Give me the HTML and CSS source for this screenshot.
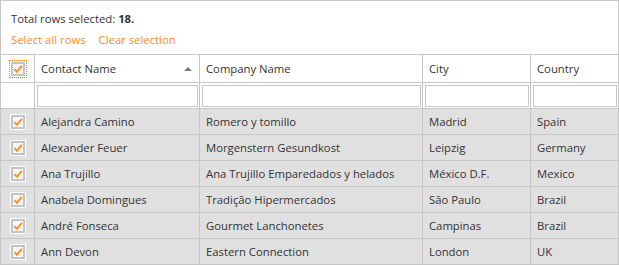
FILE: index.html
```html
<!DOCTYPE html>
<html lang="en">
<head>
    <meta charset="UTF-8">
    <title>Grid selection</title>
    <link rel="stylesheet" href="styles.css">
</head>
<body>
    <div class="grid">
        <!-- summary panel -->
        <div class="summary">
            <div class="total">Total rows selected: <b>18.</b></div>
            <div class="links">
                <a href="#" class="link">Select all rows</a>
                <a href="#" class="link">Clear selection</a>
            </div>
        </div>

        <!-- header -->
        <div class="row head">
            <div class="cell chk"><span class="box focus"><svg width="16" height="16" viewBox="0 0 16 16"><rect x="0.5" y="0.5" width="15" height="15" fill="#fff" stroke="#fff"/><rect x="2" y="2" width="12" height="12" fill="#f6f6f6" stroke="#c4c4c4" stroke-width="2"/><path d="M4.5 8.2 L7 10.8 L11.8 4.8" fill="none" stroke="#f7931e" stroke-width="2"/></svg></span></div>
            <div class="cell sorted">Contact Name <span class="arrow"></span></div>
            <div class="cell">Company Name</div>
            <div class="cell">City</div>
            <div class="cell">Country</div>
        </div>

        <!-- filter row -->
        <div class="row filter">
            <div class="cell chk"></div>
            <div class="cell"><input type="text" class="box-input"></div>
            <div class="cell"><input type="text" class="box-input"></div>
            <div class="cell"><input type="text" class="box-input"></div>
            <div class="cell"><input type="text" class="box-input"></div>
        </div>

        <div id="rows"></div>
    </div>

    <script>
        const customers = [
            ["Alejandra Camino", "Romero y tomillo", "Madrid", "Spain"],
            ["Alexander Feuer", "Morgenstern Gesundkost", "Leipzig", "Germany"],
            ["Ana Trujillo", "Ana Trujillo Emparedados y helados", "México D.F.", "Mexico"],
            ["Anabela Domingues", "Tradição Hipermercados", "São Paulo", "Brazil"],
            ["André Fonseca", "Gourmet Lanchonetes", "Campinas", "Brazil"],
            ["Ann Devon", "Eastern Connection", "London", "UK"]
        ];

        const checkSvg = '<span class="box"><svg width="16" height="16" viewBox="0 0 16 16"><rect x="0.5" y="0.5" width="15" height="15" fill="#fff" stroke="#fff"/><rect x="2" y="2" width="12" height="12" fill="#f6f6f6" stroke="#c4c4c4" stroke-width="2"/><path d="M4.5 8.2 L7 10.8 L11.8 4.8" fill="none" stroke="#f7931e" stroke-width="2"/></svg></span>';

        document.getElementById('rows').innerHTML = customers.map(c => `
            <div class="row data">
                <div class="cell chk">${checkSvg}</div>
                ${c.map(v => `<div class="cell">${v}</div>`).join('')}
            </div>`).join('');
    </script>
</body>
</html>
```

FILE: styles.css
```css
/* page */
body {
    margin: 0;
    font-family: "Open Sans", "Noto Sans", sans-serif;
    font-size: 11.3px;
    color: #333;
    background: #fff;
}

/* grid frame */
.grid {
    width: 617px;
    border: 1px solid #c6c6c6;
}

/* summary above the grid */
.summary {
    height: 54px;
    box-sizing: border-box;
    padding: 9px 10px 0;
    border-bottom: 1px solid #c6c6c6;
}

.total {
    line-height: 18px;
}

.links {
    margin-top: 3px;
    line-height: 18px;
    display: flex;
    gap: 13px;
}

.link {
    color: #f68b2c;
    text-decoration: none;
}

/* rows */
.row {
    display: grid;
    grid-template-columns: 33px 164px 222px 107px 87px;
    column-gap: 1px;
    background: #c6c6c6;
}

.row + .row,
#rows .row {
    border-top: 1px solid #c6c6c6;
}

.cell {
    background: #fff;
    padding: 0 6px;
    display: flex;
    align-items: center;
    white-space: nowrap;
    overflow: hidden;
}

.head .cell {
    height: 27px;
}

.filter .cell {
    height: 25px;
    padding: 2px 1px 1px 2px;
    box-sizing: border-box;
}

.data .cell {
    height: 25px;
    background: #e0e0e0;
}

.cell.chk {
    padding: 0;
    justify-content: center;
}

/* sort arrow */
.sorted {
    justify-content: space-between;
    padding-right: 7px;
}

.arrow {
    width: 0;
    height: 0;
    border-left: 4px solid transparent;
    border-right: 4px solid transparent;
    border-bottom: 4px solid #777;
}

/* checkbox */
.box {
    display: block;
    width: 16px;
    height: 16px;
}

.box svg {
    display: block;
}

.focus {
    outline: 1px dotted #f08a12;
    outline-offset: 0;
}

/* filter inputs */
.box-input {
    width: 100%;
    height: 100%;
    box-sizing: border-box;
    margin: 0;
    border: 1px solid #c6c6c6;
    padding: 0 3px;
    font: inherit;
}
```
